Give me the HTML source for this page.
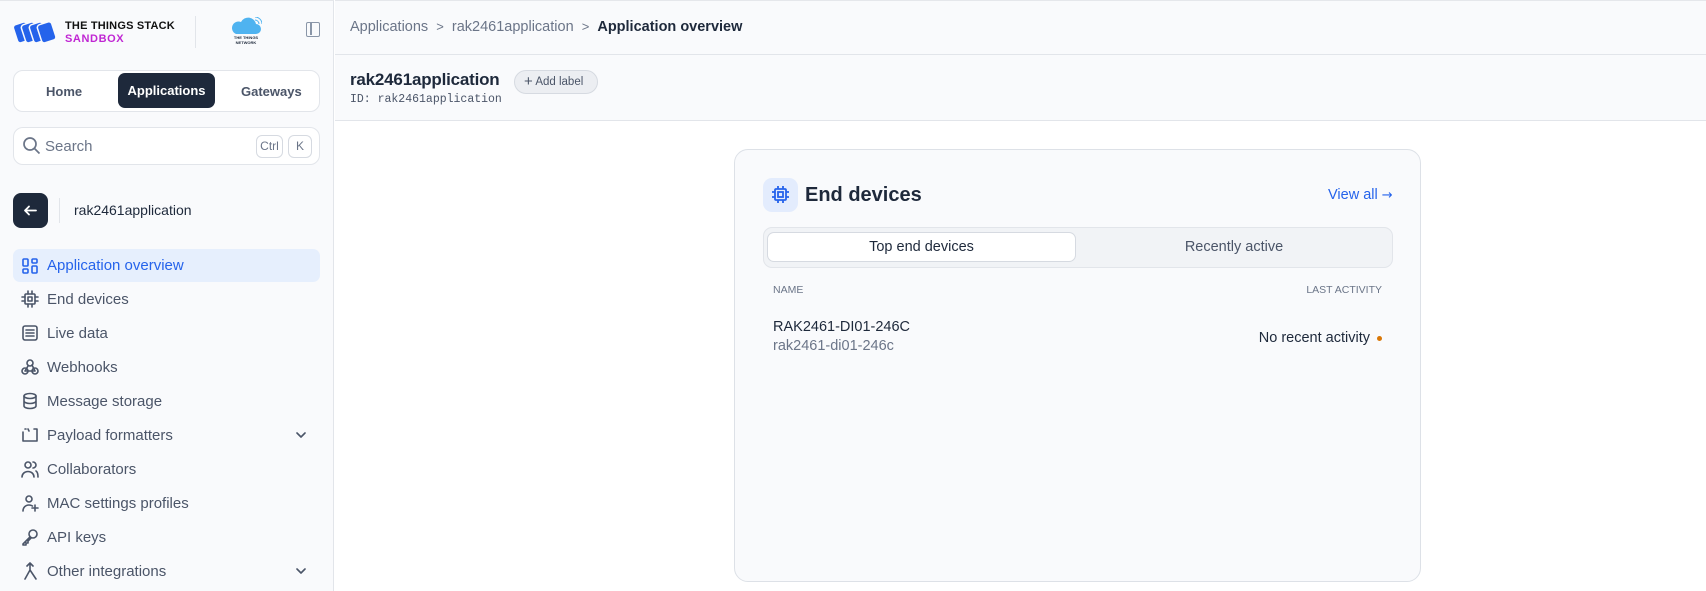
<!DOCTYPE html>
<html><head><meta charset="utf-8"><style>
*{box-sizing:border-box;margin:0;padding:0}
body{width:1706px;height:591px;overflow:hidden;background:#fff;font-family:"Liberation Sans",sans-serif;position:relative;color:#1e293b}
.abs{position:absolute}
.side{left:0;top:0;width:334px;height:591px;background:#f9fafc;border-right:1px solid #e2e5ea;border-top:1px solid #e5e7eb}
.nav{position:absolute;left:13px;width:307px;height:34px;display:flex;align-items:center;font-size:15px;color:#4b5568}
.nav svg{position:absolute;left:8px;width:18px;height:18px;fill:none;stroke:#4b5568;stroke-width:1.6;stroke-linecap:round;stroke-linejoin:round}
.nav span{position:absolute;left:34px}
.chev{position:absolute;right:14px;top:13px}
.main{left:335px;top:0;right:0;height:591px;background:#fff}
</style></head><body>
<div class="abs side">
  <svg class="abs" style="left:13px;top:19px" width="44" height="25" viewBox="0 0 44 25">
    <g fill="#2563eb" stroke="#f9fafc" stroke-width="1.5">
      <rect x="2" y="3" width="14" height="19" rx="3" transform="rotate(-18 9 12)"/>
      <rect x="10" y="3" width="14" height="19" rx="3" transform="rotate(-18 17 12)"/>
      <rect x="18" y="3" width="14" height="19" rx="3" transform="rotate(-18 25 12)"/>
      <rect x="26" y="3" width="15" height="19" rx="3" transform="rotate(-18 33 12)"/>
    </g>
  </svg>
  <div class="abs" style="left:65px;top:19px;font-size:11px;font-weight:bold;line-height:13px;color:#111;letter-spacing:0.2px">THE THINGS STACK<br><span style="color:#c026d3;letter-spacing:0.6px">SANDBOX</span></div>
  <div class="abs" style="left:195px;top:15px;width:1px;height:32px;background:#e2e5ea"></div>
  <svg class="abs" style="left:230px;top:16px" width="32" height="18" viewBox="0 0 32 18"><path d="M6 17h20a5 5 0 0 0 0-10 8 8 0 0 0-15-2 6 6 0 0 0-5 12z" fill="#4fb3f0"/><path d="M25 3a4 4 0 0 1 4 4M25 0a7 7 0 0 1 7 7" stroke="#4fb3f0" fill="none"/></svg>
  <div class="abs" style="left:230px;top:34px;font-size:4px;font-weight:bold;line-height:5px;text-align:center;width:32px">THE THINGS<br>NETWORK</div>
  <div class="abs" style="left:306px;top:21px;width:14px;height:15px;border:1.6px solid #8a96a8;border-radius:2px"><div style="position:absolute;left:3px;top:0;width:1.5px;height:12px;background:#8a96a8"></div></div>
  <div class="abs" style="left:13px;top:69px;width:307px;height:42px;border:1px solid #e2e5ea;border-radius:10px;background:#fff"></div>
  <div class="abs" style="left:46px;top:83px;font-size:13px;font-weight:bold;color:#4b5568">Home</div>
  <div class="abs" style="left:118px;top:72px;width:97px;height:35px;background:#1e293b;border-radius:7px;color:#fff;font-size:13px;font-weight:bold;text-align:center;line-height:35px">Applications</div>
  <div class="abs" style="left:241px;top:83px;font-size:13px;font-weight:bold;color:#4b5568">Gateways</div>
  <div class="abs" style="left:13px;top:126px;width:307px;height:38px;border:1px solid #e2e5ea;border-radius:10px;background:#fff"></div>
  <svg class="abs" style="left:22px;top:135px" width="19" height="19" viewBox="0 0 19 19" fill="none" stroke="#6b7588" stroke-width="1.7"><circle cx="8" cy="8" r="6"/><path d="M12.5 12.5l5 5"/></svg>
  <div class="abs" style="left:45px;top:137px;font-size:15px;color:#6b7588">Search</div>
  <div class="abs" style="left:256px;top:134px;width:27px;height:23px;border:1px solid #d6dae1;border-radius:6px;font-size:12px;color:#6b7588;text-align:center;line-height:21px">Ctrl</div>
  <div class="abs" style="left:288px;top:134px;width:24px;height:23px;border:1px solid #d6dae1;border-radius:6px;font-size:12px;color:#6b7588;text-align:center;line-height:21px">K</div>
  <div class="abs" style="left:13px;top:192px;width:35px;height:35px;background:#1e293b;border-radius:8px"><svg width="35" height="35" viewBox="0 0 35 35" fill="none" stroke="#fff" stroke-width="1.8" stroke-linecap="round" stroke-linejoin="round"><path d="M23 17.5H12M16 13.5l-4 4 4 4"/></svg></div>
  <div class="abs" style="left:59px;top:197px;width:1px;height:25px;background:#e2e5ea"></div>
  <div class="abs" style="left:74px;top:201px;font-size:14px;color:#1e293b">rak2461application</div>
  <div class="nav" style="top:248px;height:33px;background:#e6effd;border-radius:7px;color:#2563eb"><svg viewBox="0 0 18 18" style="stroke:#2563eb"><rect x="2" y="2" width="5" height="7" rx="1"/><rect x="11" y="2" width="5" height="4" rx="1"/><rect x="2" y="12" width="5" height="4" rx="1"/><rect x="11" y="9" width="5" height="7" rx="1"/></svg><span>Application overview</span></div>
  <div class="nav" style="top:281px"><svg viewBox="0 0 18 18"><rect x="4" y="4" width="10" height="10" rx="1"/><rect x="7" y="7" width="4" height="4"/><path d="M7 1v3M11 1v3M7 14v3M11 14v3M1 7h3M1 11h3M14 7h3M14 11h3"/></svg><span>End devices</span></div>
  <div class="nav" style="top:315px"><svg viewBox="0 0 18 18"><rect x="2" y="2" width="14" height="14" rx="2"/><path d="M5 6h8M5 9h8M5 12h8"/></svg><span>Live data</span></div>
  <div class="nav" style="top:349px"><svg viewBox="0 0 18 18"><circle cx="9" cy="5" r="3"/><circle cx="4" cy="13" r="3"/><circle cx="14" cy="13" r="3"/><path d="M7 8l-3 5M11 7l3 6M4 13h10"/></svg><span>Webhooks</span></div>
  <div class="nav" style="top:383px"><svg viewBox="0 0 18 18"><ellipse cx="9" cy="4" rx="6" ry="2.5"/><path d="M3 4v10c0 1.4 2.7 2.5 6 2.5s6-1.1 6-2.5V4M3 9c0 1.4 2.7 2.5 6 2.5s6-1.1 6-2.5"/></svg><span>Message storage</span></div>
  <div class="nav" style="top:417px"><svg viewBox="0 0 18 18"><path d="M2 6v9h14V3h-3M5 3H4M7 3l1 2"/></svg><span>Payload formatters</span><svg class="chev" style="left:auto;right:14px;width:10px;height:8px" viewBox="0 0 10 8"><path d="M1 2l4 4 4-4"/></svg></div>
  <div class="nav" style="top:451px"><svg viewBox="0 0 18 18"><circle cx="7" cy="5" r="3"/><path d="M1 17c0-3 2.5-5.5 6-5.5s6 2.5 6 5.5M12 2a3 3 0 0 1 0 6M15 11c1.5 1 2 3 2 6"/></svg><span>Collaborators</span></div>
  <div class="nav" style="top:485px"><svg viewBox="0 0 18 18"><circle cx="8" cy="5" r="3"/><path d="M2 17c0-3.5 2.5-6 6-6 1.5 0 2.5.4 3.5 1M14 11v6M11 14h6"/></svg><span>MAC settings profiles</span></div>
  <div class="nav" style="top:519px"><svg viewBox="0 0 18 18"><circle cx="12" cy="6" r="4"/><path d="M9 9l-7 7v1h3v-2h2v-2l3-3"/></svg><span>API keys</span></div>
  <div class="nav" style="top:553px"><svg viewBox="0 0 18 18"><path d="M9 2v6l6 9M9 8l-5 9M6 4l3-3 3 3"/></svg><span>Other integrations</span><svg class="chev" style="left:auto;right:14px;width:10px;height:8px" viewBox="0 0 10 8"><path d="M1 2l4 4 4-4"/></svg></div>
</div>
<div class="abs main">
  <div class="abs" style="left:0;top:0;right:0;height:55px;border-bottom:1px solid #e2e5ea;border-top:1px solid #e5e7eb;background:#f9fafc"></div>
  <div class="abs" style="left:15px;top:19px;font-size:14.5px;color:#6b7588">Applications&nbsp; <span style="font-size:13px">&gt;</span>&nbsp; rak2461application&nbsp; <span style="font-size:13px">&gt;</span>&nbsp; <b style="color:#1e293b">Application overview</b></div>
  <div class="abs" style="left:0;top:55px;right:0;height:66px;border-bottom:1px solid #e2e5ea;background:#f9fafc"></div>
  <div class="abs" style="left:15px;top:70px;font-size:17px;font-weight:bold;color:#1e293b;letter-spacing:-0.2px">rak2461application</div>
  <div class="abs" style="left:179px;top:70px;width:84px;height:24px;border:1px solid #d6dae1;border-radius:12px;background:#eceef2;font-size:11.5px;color:#4b5568;line-height:22px;padding-left:9px"><span style="font-size:15px;vertical-align:-1px">+</span> Add label</div>
  <div class="abs" style="left:15px;top:93px;font-size:11.5px;font-family:'Liberation Mono',monospace;color:#4b5568">ID: rak2461application</div>
  <div class="abs" style="left:399px;top:149px;width:687px;height:433px;border:1px solid #dde1e7;border-radius:14px;background:#f9fafc"></div>
  <div class="abs" style="left:428px;top:178px;width:35px;height:34px;border-radius:9px;background:#e3ecfd"><svg width="35" height="34" viewBox="0 0 35 34" fill="none" stroke="#2563eb" stroke-width="1.8"><rect x="12" y="11" width="11" height="11" rx="1"/><rect x="15" y="14" width="5" height="5"/><path d="M15 8v3M20 8v3M15 22v3M20 22v3M9 14h3M9 19h3M23 14h3M23 19h3"/></svg></div>
  <div class="abs" style="left:470px;top:184px;font-size:20px;font-weight:bold;color:#1e293b">End devices</div>
  <div class="abs" style="left:993px;top:187px;font-size:14.5px;color:#2563eb;white-space:nowrap">View all <span style="font-family:'DejaVu Sans',sans-serif;font-size:13px">→</span></div>
  <div class="abs" style="left:428px;top:227px;width:630px;height:41px;border:1px solid #e2e5ea;border-radius:9px;background:#f1f3f6"></div>
  <div class="abs" style="left:432px;top:232px;width:309px;height:30px;border:1px solid #d6dae1;border-radius:7px;background:#fff;font-size:14.5px;text-align:center;line-height:28px;color:#1e293b">Top end devices</div>
  <div class="abs" style="left:743px;top:232px;width:312px;height:30px;font-size:14.5px;text-align:center;line-height:30px;color:#4b5568">Recently active</div>
  <div class="abs" style="left:438px;top:284px;font-size:10.5px;color:#6b7588">NAME</div>
  <div class="abs" style="left:900px;top:284px;width:147px;text-align:right;font-size:10.5px;color:#6b7588">LAST ACTIVITY</div>
  <div class="abs" style="left:438px;top:319px;font-size:14.5px;color:#1e293b">RAK2461-DI01-246C</div>
  <div class="abs" style="left:438px;top:338px;font-size:14.5px;color:#6b7588">rak2461-di01-246c</div>
  <div class="abs" style="left:800px;top:330px;width:235px;text-align:right;font-size:14.5px;color:#1e293b">No recent activity</div>
  <div class="abs" style="left:1042px;top:336px;width:5px;height:5px;border-radius:50%;background:#d97706"></div>
</div>
</body></html>
